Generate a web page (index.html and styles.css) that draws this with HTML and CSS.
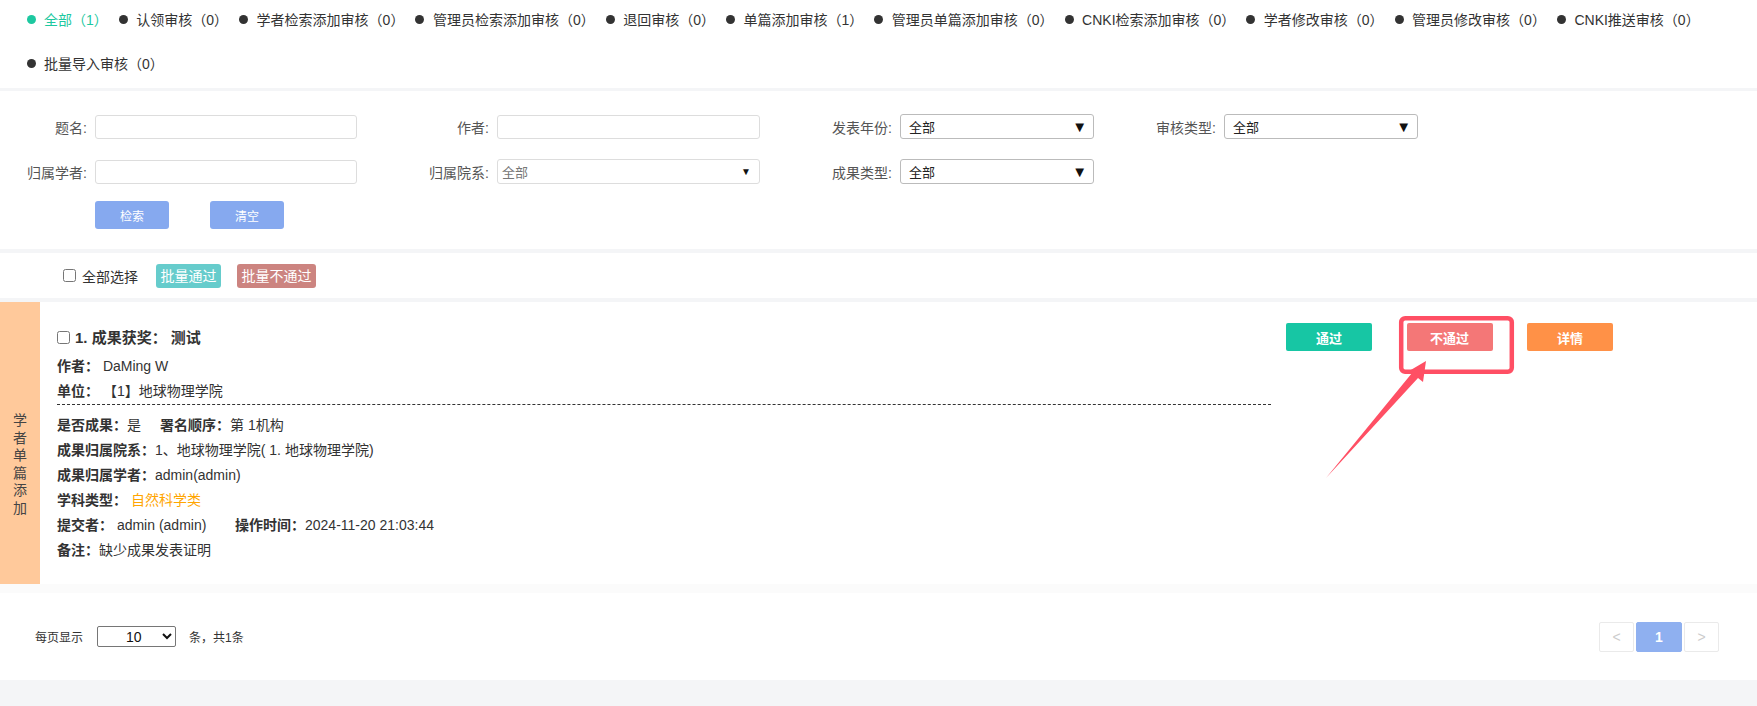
FILE: index.html
```html
<!DOCTYPE html>
<html lang="zh-CN">
<head>
    <meta charset="UTF-8">
    <meta name="viewport" content="width=device-width, initial-scale=1.0">
    <title>成果审核</title>
    <link rel="stylesheet" href="styles.css">
</head>
<body>
    <!-- 审核类型 -->
    <ul class="tabs">
        <li class="active"><i class="dot"></i>全部（1）</li>
        <li><i class="dot"></i>认领审核（0）</li>
        <li><i class="dot"></i>学者检索添加审核（0）</li>
        <li><i class="dot"></i>管理员检索添加审核（0）</li>
        <li><i class="dot"></i>退回审核（0）</li>
        <li><i class="dot"></i>单篇添加审核（1）</li>
        <li><i class="dot"></i>管理员单篇添加审核（0）</li>
        <li><i class="dot"></i>CNKI检索添加审核（0）</li>
        <li><i class="dot"></i>学者修改审核（0）</li>
        <li><i class="dot"></i>管理员修改审核（0）</li>
        <li><i class="dot"></i>CNKI推送审核（0）</li>
        <li><i class="dot"></i>批量导入审核（0）</li>
    </ul>

    <!-- 检索条件 -->
    <div class="filter">
        <div class="filter-grid">
            <label class="f-label">题名:</label>
            <input class="f-input" type="text">
            <label class="f-label">作者:</label>
            <input class="f-input" type="text">
            <label class="f-label">发表年份:</label>
            <div class="f-select dark"><span>全部</span><span class="arr">▼</span></div>
            <label class="f-label">审核类型:</label>
            <div class="f-select dark"><span>全部</span><span class="arr">▼</span></div>

            <label class="f-label">归属学者:</label>
            <input class="f-input" type="text">
            <label class="f-label">归属院系:</label>
            <div class="f-select light"><span>全部</span><span class="arr">▼</span></div>
            <label class="f-label">成果类型:</label>
            <div class="f-select dark"><span>全部</span><span class="arr">▼</span></div>
        </div>
        <div class="filter-btns">
            <button class="btn-blue">检索</button>
            <button class="btn-blue">清空</button>
        </div>
    </div>

    <!-- 批量操作 -->
    <div class="batch">
        <input type="checkbox" id="checkAll">
        <label for="checkAll" class="check-text">全部选择</label>
        <span class="tag tag-pass">批量通过</span>
        <span class="tag tag-reject">批量不通过</span>
    </div>

    <!-- 审核卡片 -->
    <div class="card">
        <div class="card-side"><span class="side-text">学者单篇添加</span></div>
        <div class="card-main">
            <div class="info">
                <div class="title"><input type="checkbox"><span>1. 成果获奖：&nbsp;测试</span></div>
                <div class="row"><b>作者：</b> DaMing W</div>
                <div class="row split"><b>单位：</b> 【1】地球物理学院</div>
                <div class="row gap-top"><span class="pair w1"><b>是否成果：</b>是</span><b>署名顺序：</b>第 1机构</div>
                <div class="row"><b>成果归属院系：</b>1、地球物理学院( 1. 地球物理学院)</div>
                <div class="row"><b>成果归属学者：</b>admin(admin)</div>
                <div class="row"><b>学科类型：</b> <span class="subject">自然科学类</span></div>
                <div class="row"><span class="pair w2"><b>提交者：</b> admin (admin)</span><b>操作时间：</b>2024-11-20 21:03:44</div>
                <div class="row"><b>备注：</b>缺少成果发表证明</div>
            </div>
            <div class="actions">
                <button class="act act-pass">通过</button>
                <button class="act act-reject">不通过</button>
                <button class="act act-detail">详情</button>
            </div>
        </div>
        <svg class="mark" width="200" height="175" viewBox="0 0 200 175">
            <rect x="81.2" y="8.2" width="110.6" height="53.6" rx="4" fill="none" stroke="#ff4f64" stroke-width="4.5"/>
            <polygon points="106,51 84,64 92,63 6,168 98,68 103,72" fill="#ff4f64"/>
        </svg>
    </div>

    <!-- 分页 -->
    <div class="pager">
        <div class="pager-left">
            <span>每页显示</span>
            <select class="page-size">
                <option>10</option>
                <option>20</option>
                <option>50</option>
            </select>
            <span>条，共1条</span>
        </div>
        <div class="pages">
            <span class="pg">&lt;</span>
            <span class="pg current">1</span>
            <span class="pg">&gt;</span>
        </div>
    </div>
</body>
</html>
```

FILE: styles.css
```css
* {
    box-sizing: border-box;
    margin: 0;
    padding: 0;
}

body {
    font-family: 'Liberation Sans', 'Noto Sans CJK SC', sans-serif;
    font-size: 14px;
    color: #333;
    background: #f4f5f7;
}

/* 审核类型 */
.tabs {
    list-style: none;
    background: white;
    display: flex;
    flex-wrap: wrap;
    row-gap: 6px;
    padding: 0 0 6px 26.5px;
    height: 88px;
    margin-bottom: 3px;
}

.tabs li {
    height: 38px;
    display: flex;
    align-items: center;
    margin-right: 11px;
    cursor: pointer;
}

.dot {
    width: 9px;
    height: 9px;
    border-radius: 50%;
    background: #333;
    margin-right: 8.5px;
}

.tabs li.active {
    color: #1dc8a0;
}

.tabs li.active .dot {
    background: #1dc8a0;
}

/* 检索条件 */
.filter {
    background: white;
    height: 158px;
    padding-top: 23px;
    margin-bottom: 4px;
}

.filter-grid {
    display: grid;
    grid-template-columns: 95px 262px 140px 263px 140px 194px 130px 194px;
    grid-auto-rows: 25px;
    row-gap: 20px;
    align-items: center;
}

.f-label {
    text-align: right;
    padding-right: 8px;
    color: #555;
}

.f-input {
    height: 24px;
    border: 1px solid #ddd;
    border-radius: 3px;
    outline: none;
}

.f-select {
    height: 25px;
    border-radius: 3px;
    display: flex;
    justify-content: space-between;
    align-items: center;
    font-size: 13px;
}

.f-select.dark {
    border: 1px solid #bbb;
    color: #222;
    padding: 0 6px 0 8px;
}

.f-select.dark .arr {
    font-size: 15px;
    color: #111;
}

.f-select.light {
    border: 1px solid #ddd;
    color: #777;
    padding: 0 8px 0 4px;
}

.f-select.light .arr {
    font-size: 10px;
    color: #111;
}

.filter-btns {
    display: flex;
    gap: 41px;
    margin: 17px 0 0 95px;
}

.btn-blue {
    width: 74px;
    height: 28px;
    border: none;
    border-radius: 3px;
    background: #86a9ef;
    color: white;
    font-size: 12px;
    font-family: inherit;
}

/* 批量操作 */
.batch {
    background: white;
    height: 45px;
    display: flex;
    align-items: center;
    padding-left: 63px;
    margin-bottom: 4px;
}

.batch input {
    width: 13px;
    height: 13px;
    margin: 0;
}

.check-text {
    margin-left: 6px;
}

.tag {
    height: 24px;
    line-height: 24px;
    padding: 0 4.5px;
    border-radius: 3px;
    color: white;
}

.tag-pass {
    background: #66cccc;
    margin-left: 18px;
}

.tag-reject {
    background: #cc8480;
    margin-left: 16px;
}

/* 审核卡片 */
.card {
    background: white;
    height: 282px;
    display: flex;
    position: relative;
}

.card-side {
    width: 40px;
    background: #ffc99b;
    padding-top: 110px;
}

.side-text {
    display: block;
    width: 14px;
    margin: 0 auto;
    line-height: 17.6px;
    color: #444;
}

.card-main {
    display: flex;
    padding: 23px 0 0 17px;
}

.info {
    width: 1214px;
}

.title {
    height: 25px;
    line-height: 25px;
    font-size: 15px;
    font-weight: bold;
    display: flex;
    align-items: center;
    margin-bottom: 4px;
}

.title input {
    width: 13px;
    height: 13px;
    margin: 0 5px 0 0;
}

.row {
    height: 25px;
    line-height: 25px;
    white-space: pre;
}

.row b {
    color: #333;
}

.row.split {
    height: 26px;
    border-bottom: 1px dashed #333;
}

.row.gap-top {
    margin-top: 8px;
}

.pair {
    display: inline-block;
}

.pair.w1 {
    width: 103px;
}

.pair.w2 {
    width: 178px;
}

.subject {
    color: #ffa500;
}

.actions {
    display: flex;
    gap: 34.5px;
    margin: -2px 0 0 15px;
    align-self: flex-start;
}

.act {
    width: 86px;
    height: 28px;
    border: none;
    border-radius: 2px;
    color: white;
    font-size: 13px;
    font-weight: bold;
    font-family: inherit;
}

.act-pass {
    background: #17c6a4;
}

.act-reject {
    background: #f47777;
}

.act-detail {
    background: #ff9147;
}

/* 标注 */
.mark {
    position: absolute;
    left: 1320px;
    top: 8px;
}

/* 分页 */
.pager {
    background: white;
    height: 96px;
    border-top: 9px solid #fbfbfb;
    display: flex;
    justify-content: space-between;
    align-items: center;
    padding: 0 38px 0 35px;
    font-size: 12px;
}

.pager-left {
    display: flex;
    align-items: center;
}

.page-size {
    width: 79px;
    height: 21px;
    margin: 0 13px 0 14px;
    padding-left: 24px;
    font-size: 14px;
    font-family: 'Liberation Sans', sans-serif;
    border: 1px solid #767676;
    border-radius: 2px;
    background: white;
    color: #111;
}

.pages {
    display: flex;
    gap: 2px;
}

.pg {
    width: 35px;
    height: 30px;
    border: 1px solid #eaeaea;
    border-radius: 2px;
    display: flex;
    justify-content: center;
    align-items: center;
    color: #ccc;
    font-size: 14px;
}

.pg.current {
    width: 46px;
    border-color: #8fb0f0;
    background: #8fb0f0;
    color: white;
    font-weight: bold;
}
```
